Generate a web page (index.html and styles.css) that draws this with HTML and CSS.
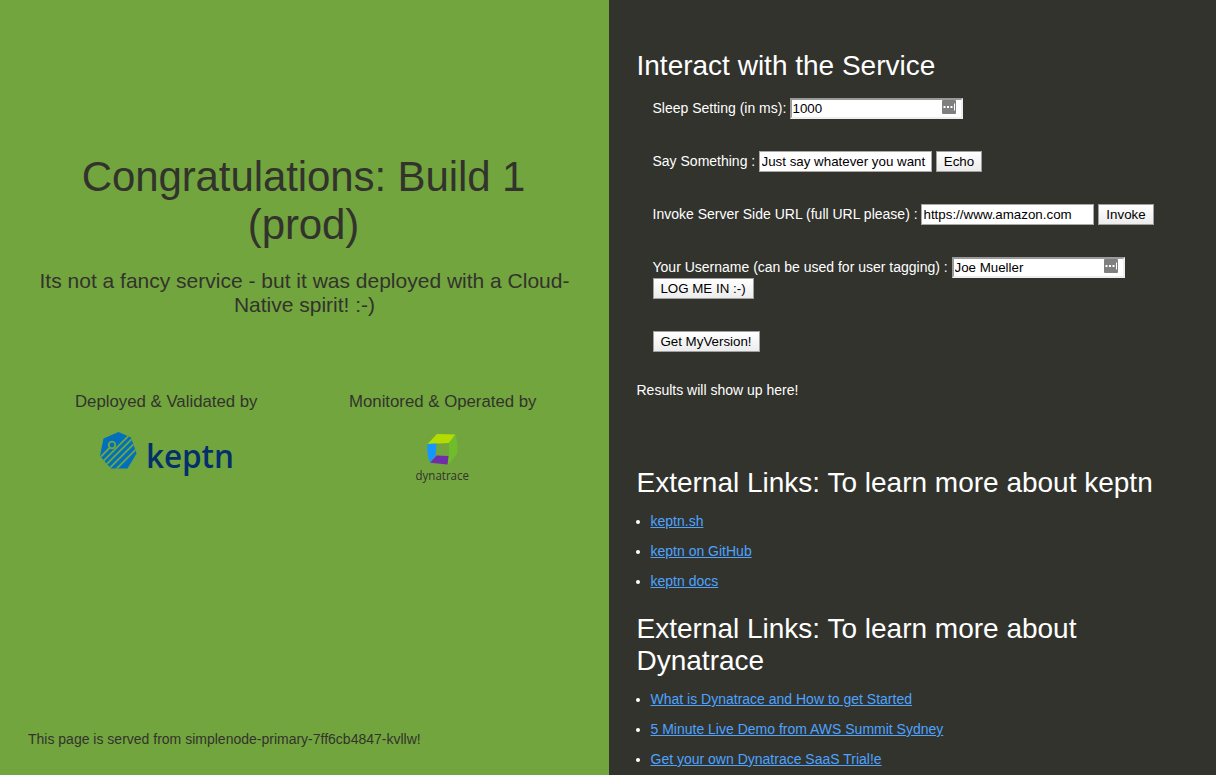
FILE: index.html
```html
<!DOCTYPE html>
<html lang="en">
<head>
<meta charset="utf-8">
<title>Simple Node Service</title>
<link rel="stylesheet" href="styles.css">
</head>
<body>
<div class="page">
  <section class="summary">
    <div class="message">
      <h1 class="title">Congratulations: Build 1<br>(prod)</h1>
      <p class="subtitle">Its not a fancy service - but it was deployed with a Cloud-<br>Native spirit! :-)</p>
      <div class="sponsors">
        <div class="sponsor">
          <p class="sponsor-label deployed">Deployed &amp; Validated by</p>
          <svg class="logo" width="160" height="65" viewBox="-4 1 160 65">
            <defs><clipPath id="hept"><path d="M28.500 12 41 17.500 46.500 33.500 37.500 48.500H21L10 36 13.500 18.500Z"/></clipPath></defs>
            <g clip-path="url(#hept)">
              <path fill="#0070bd" d="M8 10h40v40H8z"/>
              <path stroke="#73a53e" stroke-width="1.800" fill="none" d="M10 37.500 20 27.500M11 43.300 41 13.300M14 46.800 44 16.800M18 49.800 48 19.800M24 51.300 49 26.300"/>
              <circle cx="22" cy="25" r="3.300" fill="#0070bd" stroke="#73a53e" stroke-width="1.800"/>
            </g>
            <text class="keptn-word" x="56" y="48" textLength="88" lengthAdjust="spacingAndGlyphs">keptn</text>
          </svg>
        </div>
        <div class="sponsor">
          <p class="sponsor-label monitored">Monitored &amp; Operated by</p>
          <svg class="logo" width="85" height="65" viewBox="0 -4 85 65">
            <path fill="#b5dc00" d="M37 9 55.500 9.500 49 18 27.500 19Z"/>
            <path fill="#6fbd2b" d="M55.500 9.500Q58.500 21 57 29L48 39.500Q49.500 29 49 18Z"/>
            <path fill="#1496ff" d="M27.500 19 36.500 18.500 35.500 31 30 37.500Q26.500 29 27.500 19Z"/>
            <path fill="#6f2da8" d="M36.500 30.500 48.500 31 47.500 39.500 30 37.800Z"/>
            <text class="dynatrace-word" x="15.500" y="55" textLength="53.500" lengthAdjust="spacingAndGlyphs">dynatrace</text>
          </svg>
        </div>
      </div>
    </div>
    <footer class="served">This page is served from simplenode-primary-7ff6cb4847-kvllw!</footer>
  </section>

  <section class="details">
    <h2 class="heading">Interact with the Service</h2>
    <div class="controls">
      <div class="row">
        <label class="label sleep">Sleep Setting (in ms):</label>
        <span class="field inset"><input class="input" value="1000"><svg class="fill-icon" width="14" height="14" viewBox="0 0 14 14"><rect width="14" height="14" rx="1" fill="#7f7f7f"/><path d="M1.500 6h2v2h-2zM5 6h2v2H5zM8.500 6h2v2h-2zM12 3.500h1v7h-1z" fill="#fff"/></svg></span>
      </div>
      <div class="row">
        <label class="label say">Say Something :</label>
        <span class="field"><input class="input wide" value="Just say whatever you want"></span>
        <button class="button echo">Echo</button>
      </div>
      <div class="row">
        <label class="label url">Invoke Server Side URL (full URL please) :</label>
        <span class="field"><input class="input" value="https://www.amazon.com"></span>
        <button class="button invoke">Invoke</button>
      </div>
      <div class="row wrap">
        <label class="label user">Your Username (can be used for user tagging) :</label>
        <span class="field inset"><input class="input" value="Joe Mueller"><svg class="fill-icon" width="14" height="14" viewBox="0 0 14 14"><rect width="14" height="14" rx="1" fill="#7f7f7f"/><path d="M1.500 6h2v2h-2zM5 6h2v2H5zM8.500 6h2v2h-2zM12 3.500h1v7h-1z" fill="#fff"/></svg></span>
        <button class="button login">LOG ME IN :-)</button>
      </div>
      <div class="row"><button class="button version">Get MyVersion!</button></div>
    </div>
    <p class="results">Results will show up here!</p>
    <h2 class="heading">External Links: To learn more about keptn</h2>
    <ul class="links">
      <li><a href="#">keptn.sh</a></li>
      <li><a href="#">keptn on GitHub</a></li>
      <li><a href="#">keptn docs</a></li>
    </ul>
    <h2 class="heading">External Links: To learn more about<br>Dynatrace</h2>
    <ul class="links">
      <li><a href="#">What is Dynatrace and How to get Started</a></li>
      <li><a href="#">5 Minute Live Demo from AWS Summit Sydney</a></li>
      <li><a href="#">Get your own Dynatrace SaaS Trial!e</a></li>
    </ul>
  </section>
</div>
</body>
</html>
```

FILE: styles.css
```css
* { box-sizing: border-box; }
body {
  margin: 0;
  overflow: hidden;
  font: 14px/20px "Liberation Sans", Arial, sans-serif;
  color: #fff;
  background: #32332d;
}
h1, h2, p, ul { margin: 0; padding: 0; font-weight: 400; }
.page { display: grid; grid-template-columns: 609px 1fr; height: 775px; }
.summary {
  display: flex;
  flex-direction: column;
  justify-content: space-between;
  padding: 153px 28px 26px;
  color: #32332d;
  background: #73a53e;
}
.message { text-align: center; }
.title { margin-right: 2px; font-size: 42px; line-height: 48px; letter-spacing: -0.1px; }
.subtitle { margin: 20px -10px 0; font-size: 21px; line-height: 24px; }
.sponsors { display: grid; grid-template-columns: 1fr 1fr; margin-top: 75px; }
.sponsor { display: flex; flex-direction: column; align-items: center; }
.sponsor-label { font-size: 16.8px; line-height: 20px; white-space: nowrap; }
.logo { margin-top: 9px; }
.keptn-word { font: 600 33px "Open Sans", sans-serif; fill: #03306b; }
.dynatrace-word { font: 400 13px "Open Sans", sans-serif; fill: #32332d; }
.served { height: 36px; line-height: 20px; }
.details { padding: 50px 28px 0 27.5px; white-space: nowrap; }
.heading { font-size: 28px; line-height: 32px; }
.controls { display: grid; gap: 32px; margin: 16px 0 0 16px; }
.row { display: flex; align-items: center; height: 21px; gap: 4px; }
.row.wrap { flex-wrap: wrap; height: 42px; row-gap: 0; }
.label { line-height: 21px; }
.sleep { width: 133.5px; }
.say { width: 102.5px; }
.url { width: 264.5px; }
.user { width: 295.5px; }
.field {
  display: flex;
  position: relative;
  width: 173px;
  height: 21px;
  border: 1px solid #a9a9a9;
  padding: 1px;
  background: #fff;
}
.field.inset { padding: 0; border: 2px solid; border-color: #9a9a9a #eee #eee #9a9a9a; }
.input {
  width: 100%;
  height: 17px;
  padding: 0 0 0 0.5px;
  border: 0;
  outline: 0;
  background: transparent;
  color: #000;
  font: 13.333px "Liberation Sans", Arial, sans-serif;
}
.fill-icon { position: absolute; right: 5px; top: 0; }
.button {
  height: 21px;
  padding: 0;
  border: 1px solid #a0a0a0;
  color: #000;
  background: linear-gradient(#fff, #ececec);
  font: 13.333px "Liberation Sans", Arial, sans-serif;
}
.echo { width: 46px; }
.invoke { width: 56px; }
.login { width: 101px; }
.version { width: 107px; }
.results { margin: 28px 0 67px; }
.links { padding-left: 14px; margin: 12px 0 22px; }
.links li { line-height: 20px; margin-bottom: 10px; }
.links a { color: #4da3ff; text-decoration: underline; }
```
